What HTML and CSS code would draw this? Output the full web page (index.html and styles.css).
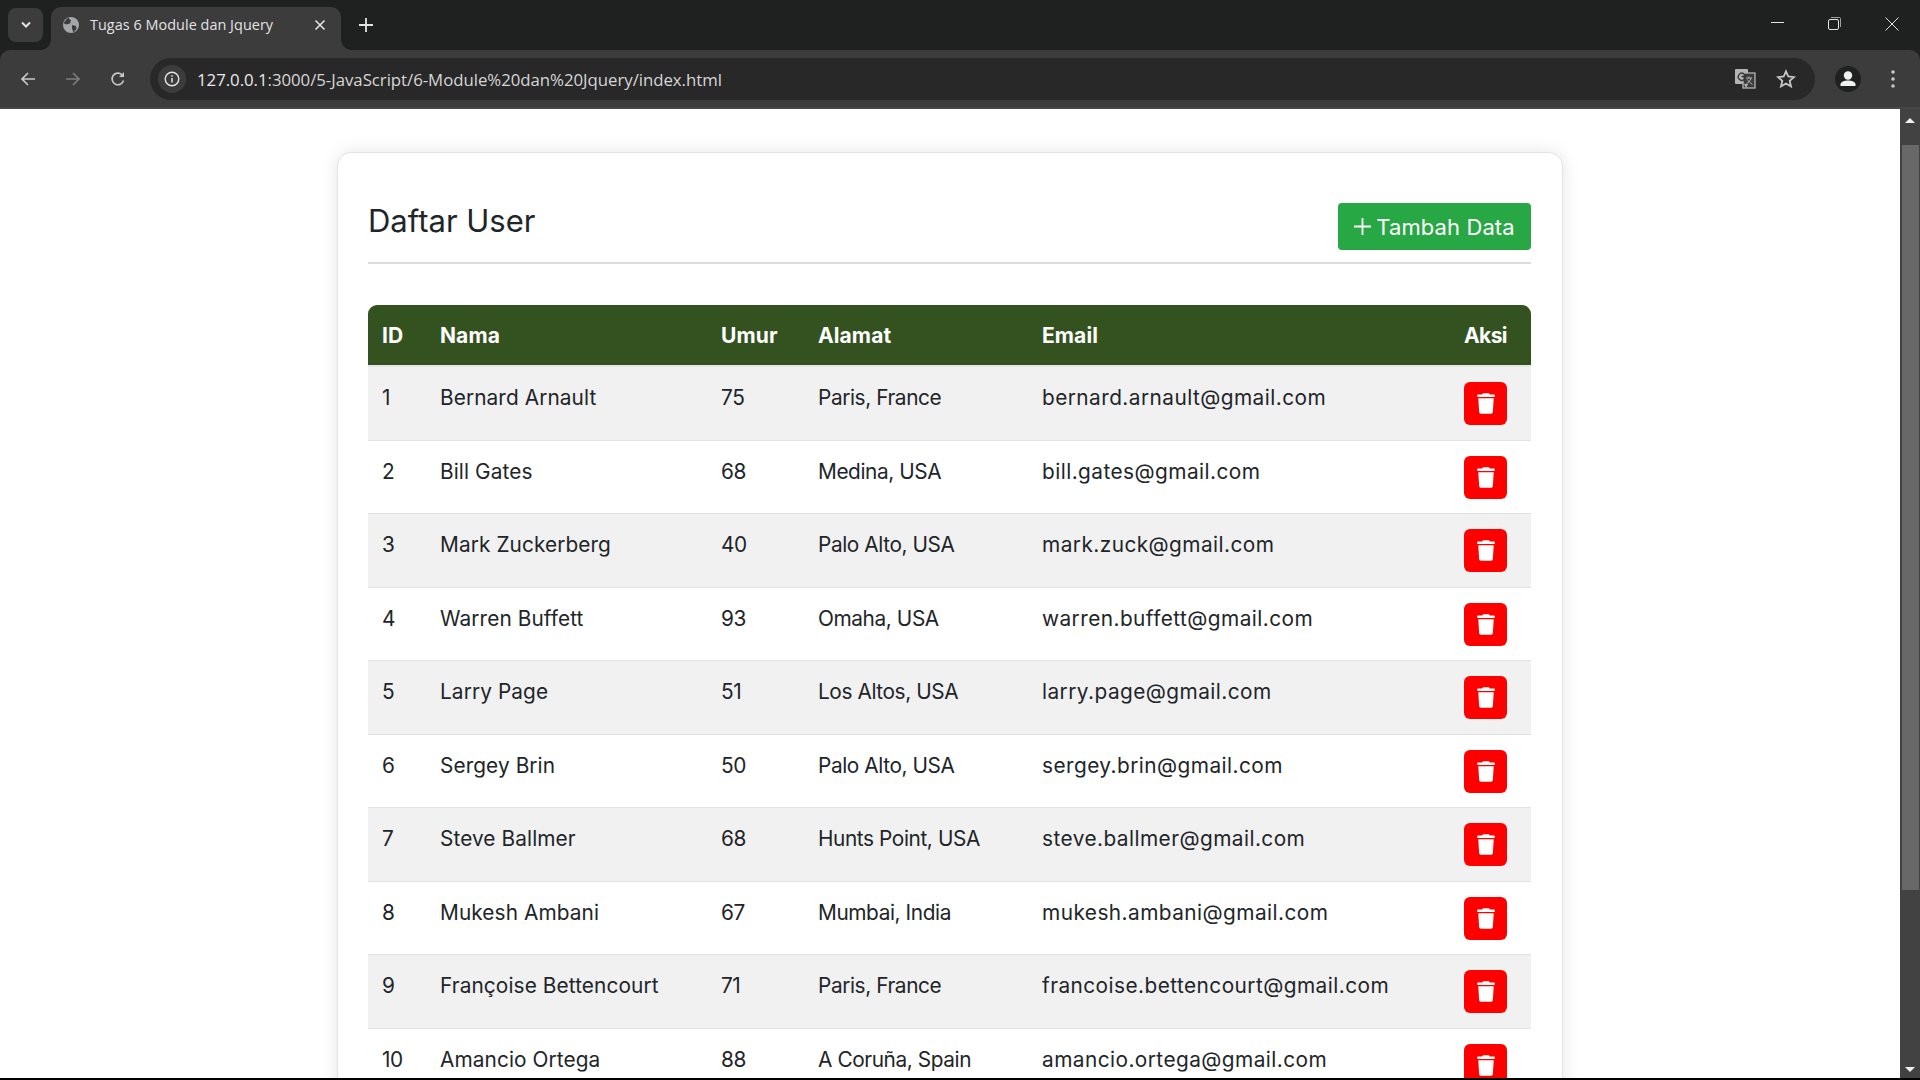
FILE: index.html
```html
<!DOCTYPE html>
<html lang="id">
<head>
<meta charset="utf-8">
<title>Tugas 6 Module dan Jquery</title>
<link rel="stylesheet" href="styles.css">
</head>
<body>
<svg class="defs" width="0" height="0"><symbol id="trash" viewBox="0 0 448 512"><path fill="#fff" d="M135.2 17.7L128 32H32C14.3 32 0 46.3 0 64S14.3 96 32 96H416c17.7 0 32-14.3 32-32s-14.3-32-32-32H320l-7.2-14.3C307.4 6.8 296.3 0 284.2 0H163.8c-12.1 0-23.2 6.8-28.6 17.7zM416 128H32L53.2 467c1.6 25.3 22.6 45 47.9 45H346.9c25.3 0 46.3-19.7 47.9-45L416 128z"/></symbol></svg>
<div class="window">
  <header class="tabstrip">
    <div class="tabsearch"><svg width="12" height="8" viewBox="0 0 12 8"><path d="M2 1.500l4 4 4-4" fill="none" stroke="#e3e3e3" stroke-width="2"/></svg></div>
    <div class="tab">
      <svg class="favicon" width="18" height="18" viewBox="0 0 18 18"><circle cx="9" cy="9" r="8" fill="#a4a7aa"/><path d="M6 1.500l3 3-1 3-4 1-2.500-1.500M10 9l4 1 .5 3-3 3.500-1.500-4z" fill="#3c3c3c"/></svg>
      <span class="tabtitle">Tugas 6 Module dan Jquery</span>
      <svg class="tabclose" width="12" height="12" viewBox="0 0 12 12"><path d="M1.500 1.500l9 9m0-9l-9 9" stroke="#e3e3e3" stroke-width="1.600"/></svg>
    </div>
    <svg class="newtab" width="14" height="14" viewBox="0 0 14 14"><path d="M7 0v14M0 7h14" stroke="#e3e3e3" stroke-width="1.800"/></svg>
    <div class="wincontrols">
      <svg width="14" height="14" viewBox="0 0 14 14"><path d="M0 5.500h13" stroke="#e3e3e3"/></svg>
      <svg width="14" height="14" viewBox="0 0 14 14"><rect x=".5" y="2.500" width="10" height="10" rx="1.500" fill="none" stroke="#e3e3e3"/><path d="M3 .5h8.500q1 0 1 1V10" fill="none" stroke="#a0a0a0"/></svg>
      <svg width="14" height="14" viewBox="0 0 14 14"><path d="M.5.5l13 13m0-13l-13 13" stroke="#e3e3e3"/></svg>
    </div>
  </header>
  <nav class="toolbar">
    <svg width="16" height="16" viewBox="0 0 16 16"><path d="M15 8H2M8 2L2 8l6 6" fill="none" stroke="#c7c7c7" stroke-width="1.700"/></svg>
    <svg class="navitem" width="16" height="16" viewBox="0 0 16 16"><path d="M1 8h13M8 2l6 6-6 6" fill="none" stroke="#7c7c7c" stroke-width="1.700"/></svg>
    <svg class="navitem" width="16" height="16" viewBox="0 0 16 16"><path d="M13.500 9.500A5.800 5.800 0 1 1 12 3.800" fill="none" stroke="#c7c7c7" stroke-width="1.700"/><path d="M14 1v5H9z" fill="#c7c7c7"/></svg>
    <div class="omnibox">
      <div class="siteinfo"><svg width="16" height="16" viewBox="0 0 16 16"><circle cx="8" cy="8" r="6.800" fill="none" stroke="#e3e3e3" stroke-width="1.400"/><path d="M8 7v4.500M8 4.200v1.600" stroke="#e3e3e3" stroke-width="1.500"/></svg></div>
      <span class="url">127.0.0.1<span class="urldim">:3000/5-JavaScript/6-Module%20dan%20Jquery/index.html</span></span>
      <svg class="translate" width="22" height="22" viewBox="0 0 22 22"><rect x="1" y="1" width="13" height="15" rx="1" fill="#b4b4b4"/><rect x="9" y="5" width="12" height="15" fill="#3c3c3c" stroke="#b4b4b4" stroke-width="1.300"/><path d="M10 16l2 4 2-4z" fill="#b4b4b4"/><path d="M10 6a3.500 3.500 0 1 0 .5 5V8.500H7.500" fill="none" stroke="#333" stroke-width="1.300"/><path d="M12 10h6M15 8.500v1.500M17 10c-.5 3-3 5-4.500 5.500M13.500 11.500c.5 1.500 3 3.500 5 5" fill="none" stroke="#b4b4b4"/></svg>
      <svg class="star" width="20" height="20" viewBox="0 0 20 20"><path d="M10 2.300l2.300 5.200 5.700.6-4.300 3.800 1.300 5.600-5-3-5 3 1.300-5.600L2 8.100l5.700-.6z" fill="none" stroke="#c7c7c7" stroke-width="1.800"/></svg>
    </div>
    <svg class="avatar" width="26" height="26" viewBox="0 0 26 26"><circle cx="13" cy="13" r="13" fill="#1f2120"/><circle cx="13" cy="9.500" r="4.200" fill="#f0f0f0"/><path d="M5.500 20v-1.500c0-2.800 4-4 7.500-4s7.500 1.200 7.500 4V20z" fill="#f0f0f0"/></svg>
    <svg class="kebab" width="4" height="18" viewBox="0 0 4 18"><circle cx="2" cy="2" r="1.800" fill="#c7c7c7"/><circle cx="2" cy="9" r="1.800" fill="#c7c7c7"/><circle cx="2" cy="16" r="1.800" fill="#c7c7c7"/></svg>
  </nav>
  <div class="viewport">
    <main class="page">
      <section class="card">
        <div class="cardhead">
          <h2 class="title">Daftar User</h2>
          <button class="addbtn"><svg width="17" height="17" viewBox="0 0 16 16"><path d="M8 0v16M0 8h16" stroke="#fff" stroke-width="1.700"/></svg>Tambah Data</button>
        </div>
        <table class="users">
          <colgroup><col class="c1"><col class="c2"><col class="c3"><col class="c4"><col class="c5"><col class="c6"></colgroup>
          <thead><tr><th>ID</th><th>Nama</th><th>Umur</th><th>Alamat</th><th>Email</th><th>Aksi</th></tr></thead>
          <tbody>
            <tr><td>1</td><td>Bernard Arnault</td><td>75</td><td>Paris, France</td><td>bernard.arnault@gmail.com</td><td><button class="del"><svg width="18" height="21"><use href="#trash"/></svg></button></td></tr>
            <tr><td>2</td><td>Bill Gates</td><td>68</td><td>Medina, USA</td><td>bill.gates@gmail.com</td><td><button class="del"><svg width="18" height="21"><use href="#trash"/></svg></button></td></tr>
            <tr><td>3</td><td>Mark Zuckerberg</td><td>40</td><td>Palo Alto, USA</td><td>mark.zuck@gmail.com</td><td><button class="del"><svg width="18" height="21"><use href="#trash"/></svg></button></td></tr>
            <tr><td>4</td><td>Warren Buffett</td><td>93</td><td>Omaha, USA</td><td>warren.buffett@gmail.com</td><td><button class="del"><svg width="18" height="21"><use href="#trash"/></svg></button></td></tr>
            <tr><td>5</td><td>Larry Page</td><td>51</td><td>Los Altos, USA</td><td>larry.page@gmail.com</td><td><button class="del"><svg width="18" height="21"><use href="#trash"/></svg></button></td></tr>
            <tr><td>6</td><td>Sergey Brin</td><td>50</td><td>Palo Alto, USA</td><td>sergey.brin@gmail.com</td><td><button class="del"><svg width="18" height="21"><use href="#trash"/></svg></button></td></tr>
            <tr><td>7</td><td>Steve Ballmer</td><td>68</td><td>Hunts Point, USA</td><td>steve.ballmer@gmail.com</td><td><button class="del"><svg width="18" height="21"><use href="#trash"/></svg></button></td></tr>
            <tr><td>8</td><td>Mukesh Ambani</td><td>67</td><td>Mumbai, India</td><td>mukesh.ambani@gmail.com</td><td><button class="del"><svg width="18" height="21"><use href="#trash"/></svg></button></td></tr>
            <tr><td>9</td><td>Françoise Bettencourt</td><td>71</td><td>Paris, France</td><td>francoise.bettencourt@gmail.com</td><td><button class="del"><svg width="18" height="21"><use href="#trash"/></svg></button></td></tr>
            <tr><td>10</td><td>Amancio Ortega</td><td>88</td><td>A Coruña, Spain</td><td>amancio.ortega@gmail.com</td><td><button class="del"><svg width="18" height="21"><use href="#trash"/></svg></button></td></tr>
          </tbody>
        </table>
      </section>
    </main>
    <aside class="scrollbar">
      <span class="arrow up"></span>
      <div class="thumb"></div>
      <span class="arrow down"></span>
    </aside>
  </div>
</div>
</body>
</html>
```

FILE: styles.css
```css
* { box-sizing: border-box; }
html, body { margin: 0; height: 100%; overflow: hidden; }
body { font-family: "Inter", "Liberation Sans", sans-serif; color: #212529; background: #fff; }
.defs { position: absolute; }
.window { height: 1080px; display: flex; flex-direction: column; background: #1f2120; }

.tabstrip { height: 50px; flex: none; background: #1f2120; display: flex; align-items: flex-start; padding-left: 8px; }
.tabsearch { flex: none; width: 35px; height: 34px; margin-top: 8px; border-radius: 8px; background: #3c3c3c; display: flex; align-items: center; justify-content: center; }
.tab { flex: none; position: relative; width: 290px; height: 43px; margin: 7px 0 0 8px; background: #3c3c3c; border-radius: 10px 10px 0 0; display: flex; align-items: center; padding: 0 15px 7px 11px; }
.tab::before, .tab::after { content: ""; position: absolute; bottom: 0; width: 10px; height: 10px; }
.tab::before { left: -10px; background: radial-gradient(circle at 0 0, #1f2120 9.500px, #3c3c3c 10px); }
.tab::after { right: -10px; background: radial-gradient(circle at 100% 0, #1f2120 9.500px, #3c3c3c 10px); }
.favicon { flex: none; }
.tabtitle { font: 14.4px/1 "Open Sans", sans-serif; color: #e3e3e3; margin-left: 10px; flex: 1; letter-spacing: .05px; white-space: nowrap; }
.tabclose { flex: none; }
.newtab { flex: none; margin: 18px 0 0 18px; }
.wincontrols { flex: none; margin-left: auto; width: 149px; padding: 17px 21px 0 0; display: flex; justify-content: space-between; }

.toolbar { height: 59px; flex: none; background: #3c3c3c; border-bottom: 2px solid #474747; border-radius: 10px 10px 0 0; display: flex; align-items: center; padding-left: 20px; }
.navitem { flex: none; margin-left: 29px; }
.omnibox { flex: none; width: 1665px; height: 42px; margin-left: 24px; border-radius: 21px; background: #282828; display: flex; align-items: center; padding-left: 8px; }
.siteinfo { flex: none; width: 28px; height: 28px; border-radius: 50%; background: #3c3c3c; display: flex; align-items: center; justify-content: center; }
.url { font: 16.8px/1 "Open Sans", sans-serif; color: #e8e8e8; margin-left: 11px; padding-top: 3px; letter-spacing: -.03px; white-space: nowrap; }
.urldim { color: #d6d6d6; }
.translate { flex: none; margin-left: auto; }
.star { flex: none; margin: 0 19px 0 20px; }
.avatar { flex: none; margin-left: 20px; }
.kebab { flex: none; margin-left: 30px; }

.viewport { flex: 1; min-height: 0; display: flex; overflow: hidden; border-bottom: 2px solid #000; background: #fff; }
.page { flex: 1; min-width: 0; height: 100%; overflow: hidden; padding-top: 43px; }
.card { width: 1226px; margin: 0 auto; border: 1px solid #e3e3e3; border-radius: 14px; padding: 50px 31px 30px 30px; box-shadow: 0 0 18px rgba(0,0,0,.1); background: #fff; }
.cardhead { display: flex; justify-content: space-between; align-items: flex-start; border-bottom: 2px solid #dcdcdc; padding-bottom: 12px; height: 61px; }
.title { margin: 0; font-size: 31px; line-height: 36px; font-weight: 400; color: #212529; letter-spacing: 0; }
.addbtn { width: 193px; height: 47px; border: 0; border-radius: 4px; background: #28a745; color: #fff; font: 400 22px/1 "Inter", sans-serif; display: flex; align-items: center; justify-content: center; gap: 5px; padding: 0; letter-spacing: .1px; }

.users { width: 1163px; margin-top: 41px; border-collapse: separate; border-spacing: 0; table-layout: fixed; font-size: 20.8px; }
.c1 { width: 58px; } .c2 { width: 281px; } .c3 { width: 97px; } .c4 { width: 224px; } .c5 { width: 422px; } .c6 { width: 81px; }
.users th { height: 62px; padding: 0 14px; background: #34521f; color: #fff; text-align: left; font-size: 21px; font-weight: 700; letter-spacing: .1px; border-bottom: 2px solid #e6e6e6; }
.users th:first-child { border-top-left-radius: 9px; }
.users th:last-child { border-top-right-radius: 9px; letter-spacing: -.6px; }
.users td { height: 73.5px; padding: 15px 14px 0; vertical-align: top; line-height: 31px; border-bottom: 1px solid #dee2e6; white-space: nowrap; letter-spacing: -.4px; }
.users td:nth-child(2) { letter-spacing: .1px; }
.users td:nth-child(5) { letter-spacing: .45px; }
.users tbody tr:nth-child(odd) td { background: #f1f1f1; }
.del { width: 43px; height: 43px; border: 0; padding: 0; border-radius: 6px; background: #f00; display: flex; align-items: center; justify-content: center; }

.scrollbar { width: 20px; flex: none; background: #424242; display: flex; flex-direction: column; align-items: center; }
.arrow { width: 0; height: 0; border-left: 5px solid transparent; border-right: 5px solid transparent; }
.up { border-bottom: 5px solid #f0f0f0; margin-top: 9px; }
.down { border-top: 5px solid #f0f0f0; margin-top: auto; margin-bottom: 6px; }
.thumb { width: 17px; height: 745px; margin-top: 22px; background: #686868; }
```
